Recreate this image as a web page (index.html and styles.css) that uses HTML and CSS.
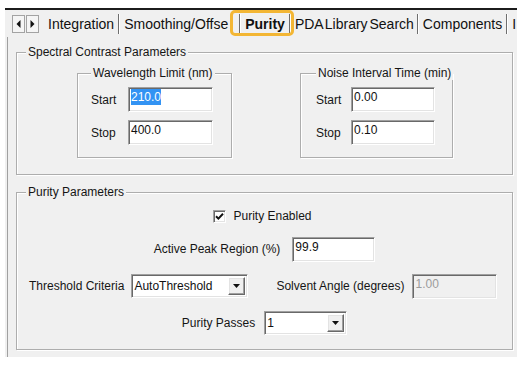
FILE: index.html
```html
<!DOCTYPE html>
<html>
<head>
<meta charset="utf-8">
<link rel="stylesheet" href="styles.css">
</head>
<body>
<div class="window">
  <div class="tabstrip">
    <div class="arrows">
      <span class="arrow-btn"><svg width="5" height="8" viewBox="0 0 5 8"><path d="M4.5 0V8L0.5 4Z" fill="#111"/></svg></span>
      <span class="arrow-btn"><svg width="5" height="8" viewBox="0 0 5 8"><path d="M0.5 0V8L4.5 4Z" fill="#111"/></svg></span>
    </div>
    <div class="tabs">
      <span class="tab">Integration</span>
      <span class="tab clip">Smoothing/Offse</span>
      <span class="tab active">Purity</span>
      <span class="tab tight">PDA Library Search</span>
      <span class="tab">Components</span>
      <span class="tab">I</span>
    </div>
  </div>
  <div class="page">
    <fieldset class="group spectral">
      <legend>Spectral Contrast Parameters</legend>
      <div class="subgroups">
        <fieldset class="group sub wl">
          <legend>Wavelength Limit (nm)</legend>
          <div class="rows">
            <span class="lbl">Start</span><div class="field"><span class="sel">210.0</span></div>
            <span class="lbl">Stop</span><div class="field">400.0</div>
          </div>
        </fieldset>
        <fieldset class="group sub noise">
          <legend>Noise Interval Time (min)</legend>
          <div class="rows">
            <span class="lbl">Start</span><div class="field">0.00</div>
            <span class="lbl">Stop</span><div class="field">0.10</div>
          </div>
        </fieldset>
      </div>
    </fieldset>
    <fieldset class="group purity">
      <legend>Purity Parameters</legend>
      <div class="prow check">
        <span class="checkbox"><svg width="9" height="9" viewBox="0 0 9 9"><path d="M1 4.2L3.4 6.6L8 1.8" fill="none" stroke="#111" stroke-width="2"/></svg></span>
        <span>Purity Enabled</span>
      </div>
      <div class="prow active-peak">
        <span>Active Peak Region (%)</span>
        <div class="field w83">99.9</div>
      </div>
      <div class="prow threshold">
        <span>Threshold Criteria</span>
        <div class="combo w117"><span>AutoThreshold</span><span class="dd"><svg width="7" height="4" viewBox="0 0 7 4"><path d="M0 0H7L3.5 4Z" fill="#111"/></svg></span></div>
        <span class="solvent">Solvent Angle (degrees)</span>
        <div class="field disabled w85">1.00</div>
      </div>
      <div class="prow passes">
        <span>Purity Passes</span>
        <div class="combo w83"><span>1</span><span class="dd"><svg width="7" height="4" viewBox="0 0 7 4"><path d="M0 0H7L3.5 4Z" fill="#111"/></svg></span></div>
      </div>
    </fieldset>
  </div>
</div>
</body>
</html>
```

FILE: styles.css
```css
* { box-sizing: border-box; }

body {
  margin: 0;
  background: #fff;
  font-family: "Liberation Sans", Arial, sans-serif;
  font-size: 12px;
  color: #151515;
}

.window {
  margin: 8px 0 0 5px;
  width: 512px;
  height: 349px;
  background: #f0f0f0;
  border-top: 2px solid #1c1c1c;
  display: flex;
  flex-direction: column;
}

.tabstrip {
  height: 27px;
  flex-shrink: 0;
  display: flex;
  align-items: center;
  padding-left: 7px;
  overflow: hidden;
}

.arrows {
  display: flex;
  gap: 1px;
  margin-right: 5px;
  flex-shrink: 0;
}

.arrow-btn {
  width: 13px;
  height: 18px;
  border: 1px solid #a3a3a3;
  background: #f5f5f5;
  display: flex;
  align-items: center;
  justify-content: center;
}

.tabs {
  display: flex;
  height: 20px;
  white-space: nowrap;
}

.tab {
  flex-shrink: 0;
  position: relative;
  padding: 0 4px;
  font-size: 14px;
  line-height: 20px;
  color: #111;
  border-right: 1px solid #6e6e6e;
  margin-right: 1px;
  box-shadow: 1px 0 0 #fff;
}

.tab.clip { padding-right: 11px; }
.tab.tight { word-spacing: -2px; padding-right: 3px; }

.tab.active { font-weight: bold; }

.tab.active::after {
  content: "";
  position: absolute;
  left: -11px;
  right: -5px;
  top: -4px;
  bottom: -2px;
  border: 3px solid #f3b634;
  border-radius: 5px;
}

.page {
  flex: 1;
  margin-left: 2px;
  border-left: 1px solid #a0a0a0;
  padding: 8px 4px 7px 8px;
}

.group {
  margin: 0;
  min-width: 0;
  border: 1px solid #adadad;
  box-shadow: inset 1px 1px 0 #fff, 1px 1px 0 #fff;
}

.group legend {
  padding: 0 2px;
  margin-left: 9px;
  font-size: 12px;
  line-height: 14px;
  white-space: nowrap;
  background: #f0f0f0;
}

.spectral { padding: 7px 0 16px; }

.subgroups {
  display: flex;
  padding-left: 60px;
  gap: 68px;
}

.sub legend { margin-left: auto; margin-right: auto; }

.sub.wl { width: 155px; padding: 7px 18px 12px 13px; }
.sub.noise { width: 153px; padding: 7px 17px 12px 15px; }

.rows {
  display: grid;
  row-gap: 8px;
  align-items: center;
}

.wl .rows { grid-template-columns: 37px 85px; }
.noise .rows { grid-template-columns: 35px 84px; }

.field {
  height: 25px;
  background: #fff;
  border: 1px solid;
  border-color: #a0a0a0 #fff #fff #a0a0a0;
  box-shadow: inset 1px 1px 0 #696969, inset -1px -1px 0 #e3e3e3;
  padding: 2px 2px 0;
  line-height: 15px;
  color: #111;
}

.sel {
  background: #3393f3;
  color: #fff;
  padding: 1px 0;
}

.field.disabled {
  background: #f0f0f0;
  color: #9b9b9b;
}

.w83 { width: 83px; }
.w85 { width: 85px; }
.w117 { width: 117px; }

.purity { margin-top: 10px; padding: 9px 0 14px; }

.prow {
  display: flex;
  align-items: center;
  justify-content: center;
  height: 24px;
  margin-top: 13px;
}

.prow.check { height: 16px; margin-top: 0; gap: 7px; padding-right: 4px; }
.prow.active-peak { gap: 12px; }
.prow.passes { gap: 9px; }

.prow.threshold { justify-content: flex-start; padding-left: 12px; }
.threshold .combo { margin-left: 7px; }
.threshold .solvent { margin-left: 28px; }
.threshold .field { margin-left: 8px; }

.checkbox {
  width: 13px;
  height: 13px;
  background: #fff;
  border: 1px solid;
  border-color: #a0a0a0 #fff #fff #a0a0a0;
  box-shadow: inset 1px 1px 0 #696969, inset -1px -1px 0 #e3e3e3;
  display: flex;
  align-items: center;
  justify-content: center;
}

.combo {
  height: 24px;
  display: flex;
  align-items: center;
  background: #fff;
  border: 1px solid;
  border-color: #a0a0a0 #fff #fff #a0a0a0;
  box-shadow: inset 1px 1px 0 #696969, inset -1px -1px 0 #e3e3e3;
  padding: 0 2px;
  color: #111;
}

.dd {
  margin-left: auto;
  width: 17px;
  height: 18px;
  background: #f0f0f0;
  border: 1px solid;
  border-color: #fff #696969 #696969 #fff;
  box-shadow: inset -1px -1px 0 #a0a0a0, inset 1px 1px 0 #e3e3e3;
  display: flex;
  align-items: center;
  justify-content: center;
}
```
